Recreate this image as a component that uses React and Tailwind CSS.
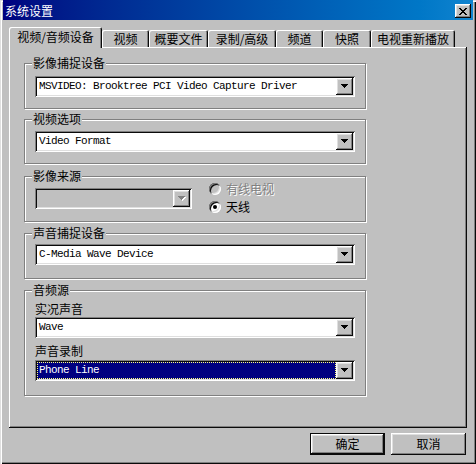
import React from 'react';

const raised =
  'shadow-[inset_-1px_-1px_#0a0a0a,inset_1px_1px_#ffffff,inset_-2px_-2px_#808080,inset_2px_2px_#dfdfdf]';
const sunken =
  'shadow-[inset_1px_1px_#808080,inset_-1px_-1px_#ffffff,inset_2px_2px_#0a0a0a,inset_-2px_-2px_#dfdfdf]';
const mono = "font-['Liberation_Mono',monospace] text-[11px] tracking-[-0.6px]";

const tabs = [
  { label: '视频', w: 'w-[47px]' },
  { label: '概要文件', w: 'w-[59px]' },
  { label: '录制/高级', w: 'w-[68px]' },
  { label: '频道', w: 'w-[47px]' },
  { label: '快照', w: 'w-[48px]' },
  { label: '电视重新播放', w: 'w-[84px]' },
];

const Arrow = ({ disabled }) => (
  <svg width="8" height="5" viewBox="0 0 8 5" shapeRendering="crispEdges">
    {disabled && <path d="M1 1h7v1H1zM2 2h5v1H2zM3 3h3v1H3zM4 4h1v1H4z" fill="#ffffff" />}
    <path
      d="M0 0h7v1H0zM1 1h5v1H1zM2 2h3v1H2zM3 3h1v1H3z"
      fill={disabled ? '#808080' : '#000000'}
    />
  </svg>
);

const Combo = ({ text, width = 'w-[320px]', disabled, selected }) => (
  <div className={`${width} h-[21px] flex items-center p-[2px] ${disabled ? 'bg-[#c0c0c0]' : 'bg-white'} ${sunken}`}>
    {selected ? (
      <div className="flex-1 h-full flex items-center pl-[1px] bg-[#000080] border border-dotted border-[#ffff80]">
        <span className={`${mono} text-white leading-none`}>{text}</span>
      </div>
    ) : (
      <div className="flex-1 h-full flex items-center pl-[2px]">
        <span className={`${mono} text-black leading-none`}>{text}</span>
      </div>
    )}
    <div className={`w-[17px] h-[17px] bg-[#c0c0c0] flex items-center justify-center ${raised}`}>
      <Arrow disabled={disabled} />
    </div>
  </div>
);

const Group = ({ label, h, mt = '', children }) => (
  <div className={`relative w-[342px] ${h} ${mt} border border-[#808080] shadow-[inset_1px_1px_#ffffff,1px_1px_#ffffff]`}>
    <span className="absolute left-[7px] -top-[8px] bg-[#c0c0c0] px-[1px] leading-[14px] text-black">
      {label}
    </span>
    {children}
  </div>
);

const Radio = ({ label, checked, disabled }) => (
  <div className="flex items-center h-[18px]">
    <div
      className={`w-[12px] h-[12px] rounded-full flex items-center justify-center ${disabled ? 'bg-[#c0c0c0]' : 'bg-white'} shadow-[inset_1px_1px_#808080,inset_-1px_-1px_#ffffff,inset_2px_2px_#0a0a0a,inset_-2px_-2px_#dfdfdf]`}
    >
      {checked && <div className="w-[4px] h-[4px] rounded-full bg-black" />}
    </div>
    <span
      className={`ml-[5px] leading-[14px] ${disabled ? 'text-[#808080] [text-shadow:1px_1px_0_#ffffff]' : 'text-black'}`}
    >
      {label}
    </span>
  </div>
);

const Button = ({ label, isDefault }) => (
  <div
    className={`w-[75px] h-[22px] bg-[#c0c0c0] flex items-center justify-center leading-none text-black ${
      isDefault
        ? 'shadow-[inset_1px_1px_#0a0a0a,inset_-1px_-1px_#0a0a0a,inset_-2px_-2px_#0a0a0a,inset_2px_2px_#ffffff,inset_-3px_-3px_#808080,inset_3px_3px_#dfdfdf]'
        : raised
    }`}
  >
    {label}
  </div>
);

export default function App() {
  return (
    <div className="w-[476px] h-[464px] bg-[#c0c0c0] px-[3px] font-['Noto_Sans_CJK_SC',sans-serif] text-[12px] select-none shadow-[inset_1px_1px_#dfdfdf,inset_2px_2px_#ffffff,inset_-1px_-1px_#0a0a0a,inset_-2px_-2px_#808080]">
      {/* title bar */}
      <div className="h-[20px] pt-[2px] flex items-center justify-between pl-[2px] pr-[2px] bg-gradient-to-r from-[#000080] to-[#1084d0]">
        <span className="text-white leading-none">系统设置</span>
        <div className={`w-[16px] h-[14px] bg-[#c0c0c0] flex items-center justify-center ${raised}`}>
          <svg width="8" height="7" viewBox="0 0 8 7" shapeRendering="crispEdges">
            <path
              d="M0 0h2v1H0zM6 0h2v1H6zM1 1h2v1H1zM5 1h2v1H5zM2 2h4v1H2zM3 3h2v1H3zM2 4h4v1H2zM1 5h2v1H1zM5 5h2v1H5zM0 6h2v1H0zM6 6h2v1H6z"
              fill="#000000"
            />
          </svg>
        </div>
      </div>

      {/* tabs */}
      <div className="mt-[7px] pl-[6px] flex items-end h-[20px]">
        <div className="relative z-10 w-[93px] h-[21px] -mb-[1px] bg-[#c0c0c0] rounded-t-[2px] flex items-center justify-center leading-none pb-[2px] shadow-[inset_1px_1px_#ffffff,inset_-1px_0_#0a0a0a,inset_-2px_0_#808080]">
          视频/音频设备
        </div>
        {tabs.map((t) => (
          <div
            key={t.label}
            className={`${t.w} h-[17px] bg-[#c0c0c0] rounded-t-[2px] flex items-center justify-center leading-none pt-[1px] shadow-[inset_1px_1px_#ffffff,inset_-1px_0_#0a0a0a,inset_-2px_0_#808080]`}
          >
            {t.label}
          </div>
        ))}
      </div>

      {/* panel */}
      <div className="ml-[6px] w-[458px] h-[381px] bg-[#c0c0c0] pl-[15px] pt-[16px] flex flex-col shadow-[inset_-1px_-1px_#0a0a0a,inset_1px_1px_#ffffff,inset_-2px_-2px_#808080]">
        <Group label="影像捕捉设备" h="h-[46px]">
          <div className="pl-[10px] pt-[12px]">
            <Combo text="MSVIDEO: Brooktree PCI Video Capture Driver" />
          </div>
        </Group>

        <Group label="视频选项" h="h-[45px]" mt="mt-[10px]">
          <div className="pl-[10px] pt-[11px]">
            <Combo text="Video Format" />
          </div>
        </Group>

        <Group label="影像来源" h="h-[46px]" mt="mt-[12px]">
          <div className="pl-[10px] pt-[11px] flex items-start">
            <Combo text="" width="w-[157px]" disabled />
            <div className="ml-[17px] -mt-[8px] flex flex-col">
              <Radio label="有线电视" disabled />
              <Radio label="天线" checked />
            </div>
          </div>
        </Group>

        <Group label="声音捕捉设备" h="h-[46px]" mt="mt-[11px]">
          <div className="pl-[10px] pt-[10px]">
            <Combo text="C-Media Wave Device" />
          </div>
        </Group>

        <Group label="音频源" h="h-[106px]" mt="mt-[11px]">
          <div className="pl-[10px] pt-[11px] flex flex-col">
            <span className="leading-[14px] text-black">实况声音</span>
            <div className="mt-[1px]">
              <Combo text="Wave" />
            </div>
            <span className="mt-[6px] leading-[14px] text-black">声音录制</span>
            <div className="mt-[2px]">
              <Combo text="Phone Line" selected />
            </div>
          </div>
        </Group>
      </div>

      {/* buttons */}
      <div className="mt-[5px] pr-[7px] flex justify-end gap-[6px]">
        <Button label="确定" isDefault />
        <Button label="取消" />
      </div>
    </div>
  );
}
